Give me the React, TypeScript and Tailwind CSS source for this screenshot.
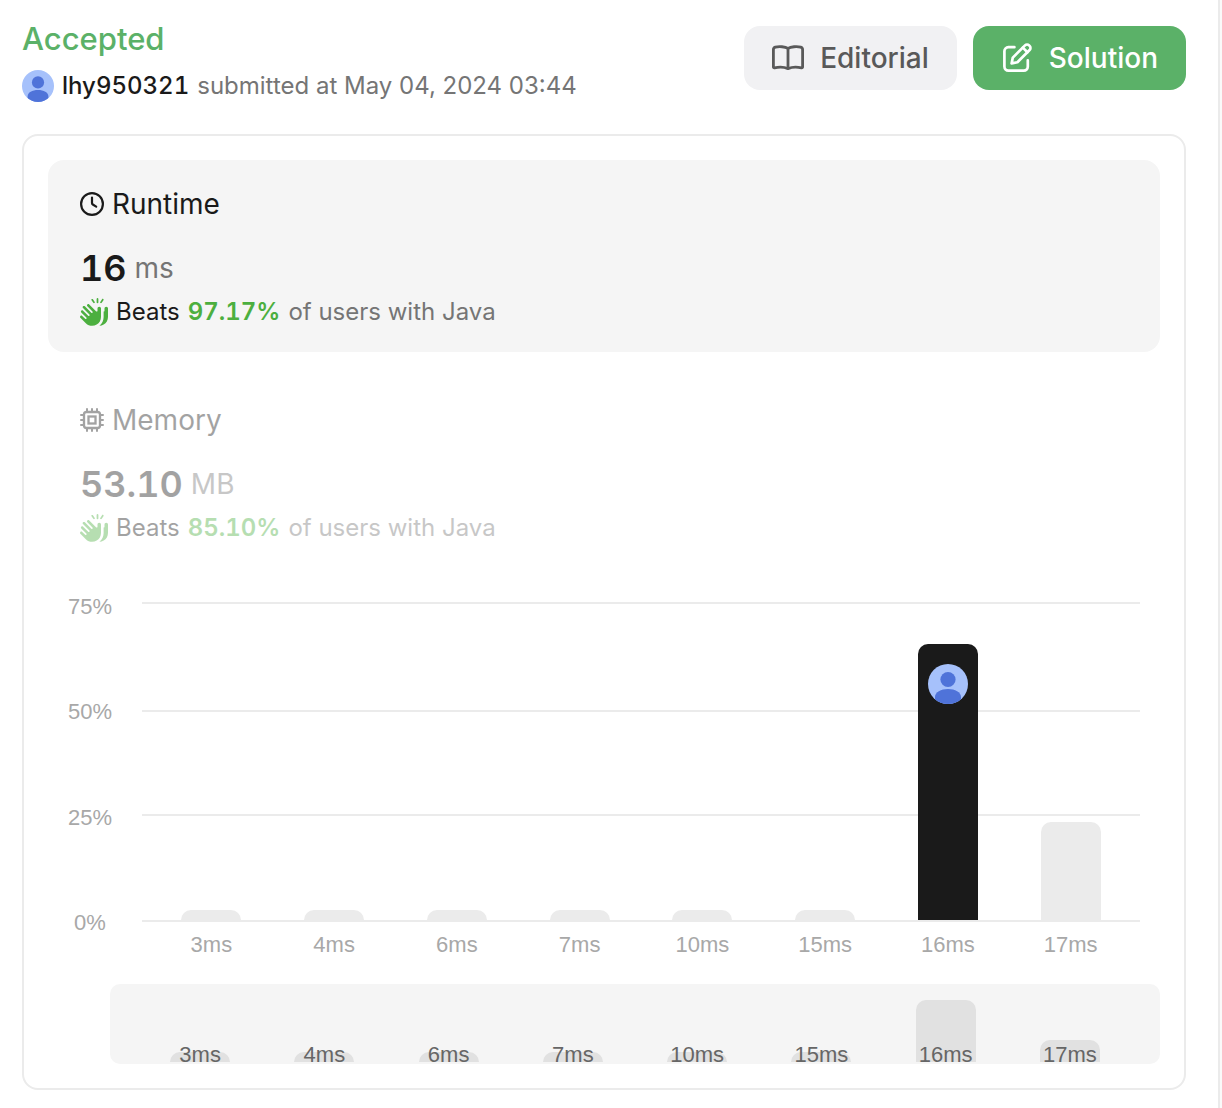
import { useState } from 'react';
import type { ReactNode } from 'react';
import { FaHandsClapping } from 'react-icons/fa6';

const buckets = [
  { label: '3ms', height: 10, preview: 10 },
  { label: '4ms', height: 10, preview: 10 },
  { label: '6ms', height: 10, preview: 10 },
  { label: '7ms', height: 10, preview: 10 },
  { label: '10ms', height: 10, preview: 10 },
  { label: '15ms', height: 10, preview: 10 },
  { label: '16ms', height: 276, preview: 62, mine: true },
  { label: '17ms', height: 98, preview: 22 },
];

const ticks = ['75%', '50%', '25%', '0%'];

function Avatar({ className }: { className: string }) {
  return (
    <svg viewBox="0 0 40 40" className={className} aria-hidden="true">
      <clipPath id="avatar-clip">
        <circle cx="20" cy="20" r="20" />
      </clipPath>
      <g clipPath="url(#avatar-clip)">
        <rect width="40" height="40" fill="#a6c1fb" />
        <circle cx="20" cy="15.5" r="7.6" fill="#4f73d9" />
        <path d="M7 40v-7c0-5 6-8 13-8s13 3 13 8v7z" fill="#4f73d9" />
      </g>
    </svg>
  );
}

function BookIcon() {
  return (
    <svg viewBox="0 0 32 32" fill="none" stroke="currentColor" strokeWidth="2.8" strokeLinejoin="round" className="h-8 w-8" aria-hidden="true">
      <path d="M16 6.4C13.2 4.6 6.8 4.2 3.3 5.200Q1.400 5.800 1.400 7.600V25Q1.400 26 2.500 25.800C6.600 24.800 12 24.800 16 26.600C20 24.800 25.400 24.800 29.500 25.800Q30.600 26 30.600 25V7.600Q30.600 5.800 28.700 5.200C25.200 4.200 18.800 4.600 16 6.400Z" />
      <path d="M16 6.400V26.600" />
    </svg>
  );
}

function PenIcon() {
  return (
    <svg viewBox="0 0 32 32" fill="none" stroke="currentColor" strokeWidth="2.7" strokeLinecap="round" strokeLinejoin="round" className="h-8 w-8" aria-hidden="true">
      <path d="M13.400 5.200H7.400a4 4 0 0 0-4 4v15.400a4 4 0 0 0 4 4h15.400a4 4 0 0 0 4-4V18.400" />
      <path d="M10.600 21.400l1.200-5.800L24 3.400a2.900 2.900 0 0 1 4.100 0l.5.500a2.900 2.900 0 0 1 0 4.100L16.400 20.200z" />
      <path d="M21.800 5.600l4.600 4.600" />
    </svg>
  );
}

function ClockIcon() {
  return (
    <svg viewBox="0 0 24 24" fill="none" stroke="currentColor" strokeWidth="2.200" strokeLinecap="round" className="h-6 w-6" aria-hidden="true">
      <circle cx="12" cy="12" r="10.900" />
      <path d="M12 5.600V11q0 1 .8 1.500L16.200 14.600" />
    </svg>
  );
}

function ChipIcon() {
  return (
    <svg viewBox="0 0 24 24" fill="none" stroke="currentColor" strokeWidth="2.300" strokeLinecap="round" className="h-6 w-6" aria-hidden="true">
      <rect x="4" y="4" width="16" height="16" rx="2.500" />
      <rect x="8.500" y="8.500" width="7" height="7" />
      <path d="M7 1v3M12 1v3M17 1v3M7 20v3M12 20v3M17 20v3M1 7h3M1 12h3M1 17h3M20 7h3M20 12h3M20 17h3" strokeWidth="2" />
    </svg>
  );
}

type MetricProps = {
  icon: ReactNode;
  title: string;
  value: string;
  unit: string;
  beats: string;
  active: boolean;
  onClick: () => void;
};

function Metric({ icon, title, value, unit, beats, active, onClick }: MetricProps) {
  return (
    <button
      type="button"
      aria-pressed={active}
      onClick={onClick}
      className={`block w-full rounded-2xl px-8 pt-7 pb-6 text-left text-[#1a1a1a] ${active ? 'bg-[#f5f5f5]' : ''}`}
    >
      <div className={active ? '' : 'opacity-40'}>
        <div className="flex h-8 items-center gap-2 text-[28px]">
          {icon}
          {title}
        </div>
        <div className="mt-6 flex h-12 items-center gap-2">
          <span className="text-4xl font-semibold tabular-nums">{value}</span>
          <span className="text-[28px] text-[#757575]">{unit}</span>
        </div>
        <div className="mt-1 flex h-8 items-center gap-2 text-2xl">
          <FaHandsClapping className="h-7 w-7 text-[#4caf3f]" />
          <span>Beats</span>
          <span className="font-semibold tabular-nums text-[#4caf3f]">{beats}</span>
          <span className="text-[#757575]">of users with Java</span>
        </div>
      </div>
    </button>
  );
}

function Chart() {
  return (
    <div className="mt-[27px] flex gap-[30px] px-5 font-['Liberation_Sans',Arial,sans-serif] text-[22px] leading-6 text-[#a8a8a8]">
      <div className="flex h-[340px] w-11 flex-col items-center justify-between">
        {ticks.map((tick) => (
          <span key={tick}>{tick}</span>
        ))}
      </div>
      <div className="flex-1 pt-[7px]">
        <div className="relative">
          <div className="grid grid-rows-[108px_104px_106px_2px]">
            {ticks.map((tick) => (
              <div key={tick} className="border-t-2 border-[#ebebeb]" />
            ))}
          </div>
          <div className="absolute inset-x-2 top-0 bottom-0.5 grid grid-cols-8 items-end justify-items-center">
            {buckets.map((bucket) => (
              <div
                key={bucket.label}
                className={`flex w-[60px] justify-center rounded-t-[10px] ${bucket.mine ? 'bg-[#1a1a1a] pt-5' : 'bg-[#ebebeb]'}`}
                style={{ height: bucket.height }}
              >
                {bucket.mine && <Avatar className="h-10 w-10" />}
              </div>
            ))}
          </div>
        </div>
        <div className="mt-[11px] grid grid-cols-8 px-2 text-center">
          {buckets.map((bucket) => (
            <span key={bucket.label}>{bucket.label}</span>
          ))}
        </div>
      </div>
    </div>
  );
}

function Preview() {
  return (
    <div className="mt-[27px] ml-[62px] grid h-20 grid-cols-8 items-end justify-items-center rounded-[10px] bg-[#f5f5f5] px-7 pb-0.5 font-['Liberation_Sans',Arial,sans-serif] text-[22px] leading-[14px] text-[#666666]">
      {buckets.map((bucket) => (
        <div key={bucket.label} className="flex w-[60px] items-end justify-center rounded-t-[10px] bg-[#e1e1e1]" style={{ height: bucket.preview }}>
          {bucket.label}
        </div>
      ))}
    </div>
  );
}

export default function App() {
  const [metric, setMetric] = useState('runtime');

  return (
    <div className="min-h-screen bg-[#fafafa] pr-0.5 font-['Inter',sans-serif]">
      <main className="min-h-screen border-r-2 border-[#ebebeb] bg-white pt-5 pr-8 pb-4 pl-[22px]">
        <header className="flex items-start justify-between">
          <div>
            <h1 className="text-[31px] leading-[38px] font-medium text-[#5bb168]">Accepted</h1>
            <div className="mt-3 flex h-8 items-center gap-2 text-2xl">
              <Avatar className="h-8 w-8" />
              <a href="#" className="font-medium tabular-nums text-[#1a1a1a]">lhy950321</a>
              <span className="text-[#757575]">submitted at May 04, 2024 03:44</span>
            </div>
          </div>
          <div className="mt-1.5 flex gap-4 text-[28px] font-medium">
            <button type="button" className="flex h-16 items-center gap-4 rounded-2xl bg-[#f1f1f3] px-7 text-[#595959]">
              <BookIcon />
              Editorial
            </button>
            <button type="button" className="flex h-16 items-center gap-4 rounded-2xl bg-[#5bb168] px-7 text-white">
              <PenIcon />
              Solution
            </button>
          </div>
        </header>

        <section className="mt-8 rounded-2xl border-2 border-[#ebebeb] p-6">
          <div className="flex flex-col gap-6">
            <Metric
              icon={<ClockIcon />}
              title="Runtime"
              value="16"
              unit="ms"
              beats="97.17%"
              active={metric === 'runtime'}
              onClick={() => setMetric('runtime')}
            />
            <Metric
              icon={<ChipIcon />}
              title="Memory"
              value="53.10"
              unit="MB"
              beats="85.10%"
              active={metric === 'memory'}
              onClick={() => setMetric('memory')}
            />
          </div>
          <Chart />
          <Preview />
        </section>
      </main>
    </div>
  );
}
